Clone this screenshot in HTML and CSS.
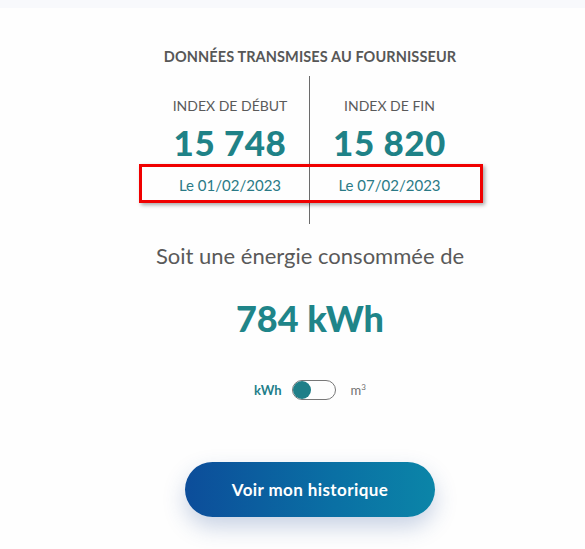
FILE: index.html
```html
<!DOCTYPE html>
<html lang="fr">
<head>
    <meta charset="UTF-8">
    <meta name="viewport" content="width=device-width, initial-scale=1.0">
    <title>Relevé</title>
    <link rel="stylesheet" href="styles.css">
</head>
<body>

<div class="topbar"></div>

<div class="container">
    <h2 class="title">DONNÉES TRANSMISES AU FOURNISSEUR</h2>

    <!-- Index début / fin -->
    <div class="index-grid">
        <div class="index-col">
            <div class="index-label">INDEX DE DÉBUT</div>
            <div class="index-value">15 748</div>
            <div class="index-date">Le 01/02/2023</div>
        </div>
        <div class="index-col">
            <div class="index-label">INDEX DE FIN</div>
            <div class="index-value">15 820</div>
            <div class="index-date">Le 07/02/2023</div>
        </div>
        <div class="highlight"></div>
    </div>

    <p class="energy-text">Soit une énergie consommée de</p>
    <div class="energy-value">784 kWh</div>

    <div class="unit-switch">
        <span class="unit unit-active">kWh</span>
        <span class="switch"><span class="knob"></span></span>
        <span class="unit">m<sup>3</sup></span>
    </div>

    <button class="btn-history">Voir mon historique</button>
</div>

</body>
</html>
```

FILE: styles.css
```css
/* Global styling */
html, body {
    background-color: #fefefe;
}

body {
    font-family: 'Lato', 'Open Sans', sans-serif;
    margin: 0;
    padding: 0;
}

.topbar {
    height: 8px;
    background-color: #f8f9fc;
}

.container {
    padding: 0 0 40px 35px;
    display: flex;
    flex-direction: column;
    align-items: center;
}

.title {
    margin: 40px 0 0;
    font-size: 14.5px;
    font-weight: 700;
    color: #575757;
    letter-spacing: 0.1px;
}

/* Index columns */
.index-grid {
    position: relative;
    display: grid;
    grid-template-columns: 159px 159px;
    margin-top: 11px;
}

.index-col {
    text-align: center;
    padding: 21px 0 30px;
}

.index-col:first-child {
    border-right: 1px solid #6b6b6b;
}

.index-label {
    font-size: 14px;
    color: #5a5a5a;
    line-height: 18px;
}

.index-value {
    margin-top: 7px;
    font-size: 35px;
    font-weight: 900;
    color: #1f8287;
    line-height: 40px;
    letter-spacing: 0.5px;
}

.index-date {
    margin-top: 14px;
    font-size: 15px;
    color: #2a7a86;
    line-height: 18px;
}

.highlight {
    position: absolute;
    left: -12px;
    right: -14px;
    top: 88px;
    height: 33px;
    border: 3px solid #f00000;
    box-shadow: 2px 2px 4px rgba(0, 0, 0, 0.35);
    pointer-events: none;
}

.energy-text {
    margin: 18px 0 0;
    font-size: 22px;
    color: #595959;
    line-height: 28px;
}

.energy-value {
    margin-top: 26px;
    font-size: 36px;
    font-weight: 900;
    color: #1f8589;
    line-height: 44px;
}

/* Unit toggle */
.unit-switch {
    margin-top: 40px;
    display: flex;
    align-items: center;
    gap: 10px;
}

.unit {
    font-size: 13px;
    color: #707070;
}

.unit sup {
    font-size: 8px;
}

.unit-active {
    font-weight: 700;
    color: #1f7f8a;
}

.switch {
    width: 42px;
    height: 18px;
    border: 1px solid #777;
    border-radius: 10px;
    display: flex;
    align-items: center;
    margin-right: 5px;
}

.knob {
    width: 18px;
    height: 18px;
    border-radius: 50%;
    background-color: #1f7f88;
}

/* Button */
.btn-history {
    margin-top: 62px;
    width: 250px;
    height: 55px;
    border: none;
    border-radius: 28px;
    background: linear-gradient(90deg, #0c4d9a 0%, #0a70a4 60%, #0b85a8 100%);
    color: #ffffff;
    font-family: 'Lato', sans-serif;
    font-size: 17px;
    font-weight: 700;
    letter-spacing: 0.4px;
    box-shadow: 0 10px 22px rgba(40, 80, 150, 0.25);
    cursor: pointer;
}
```
